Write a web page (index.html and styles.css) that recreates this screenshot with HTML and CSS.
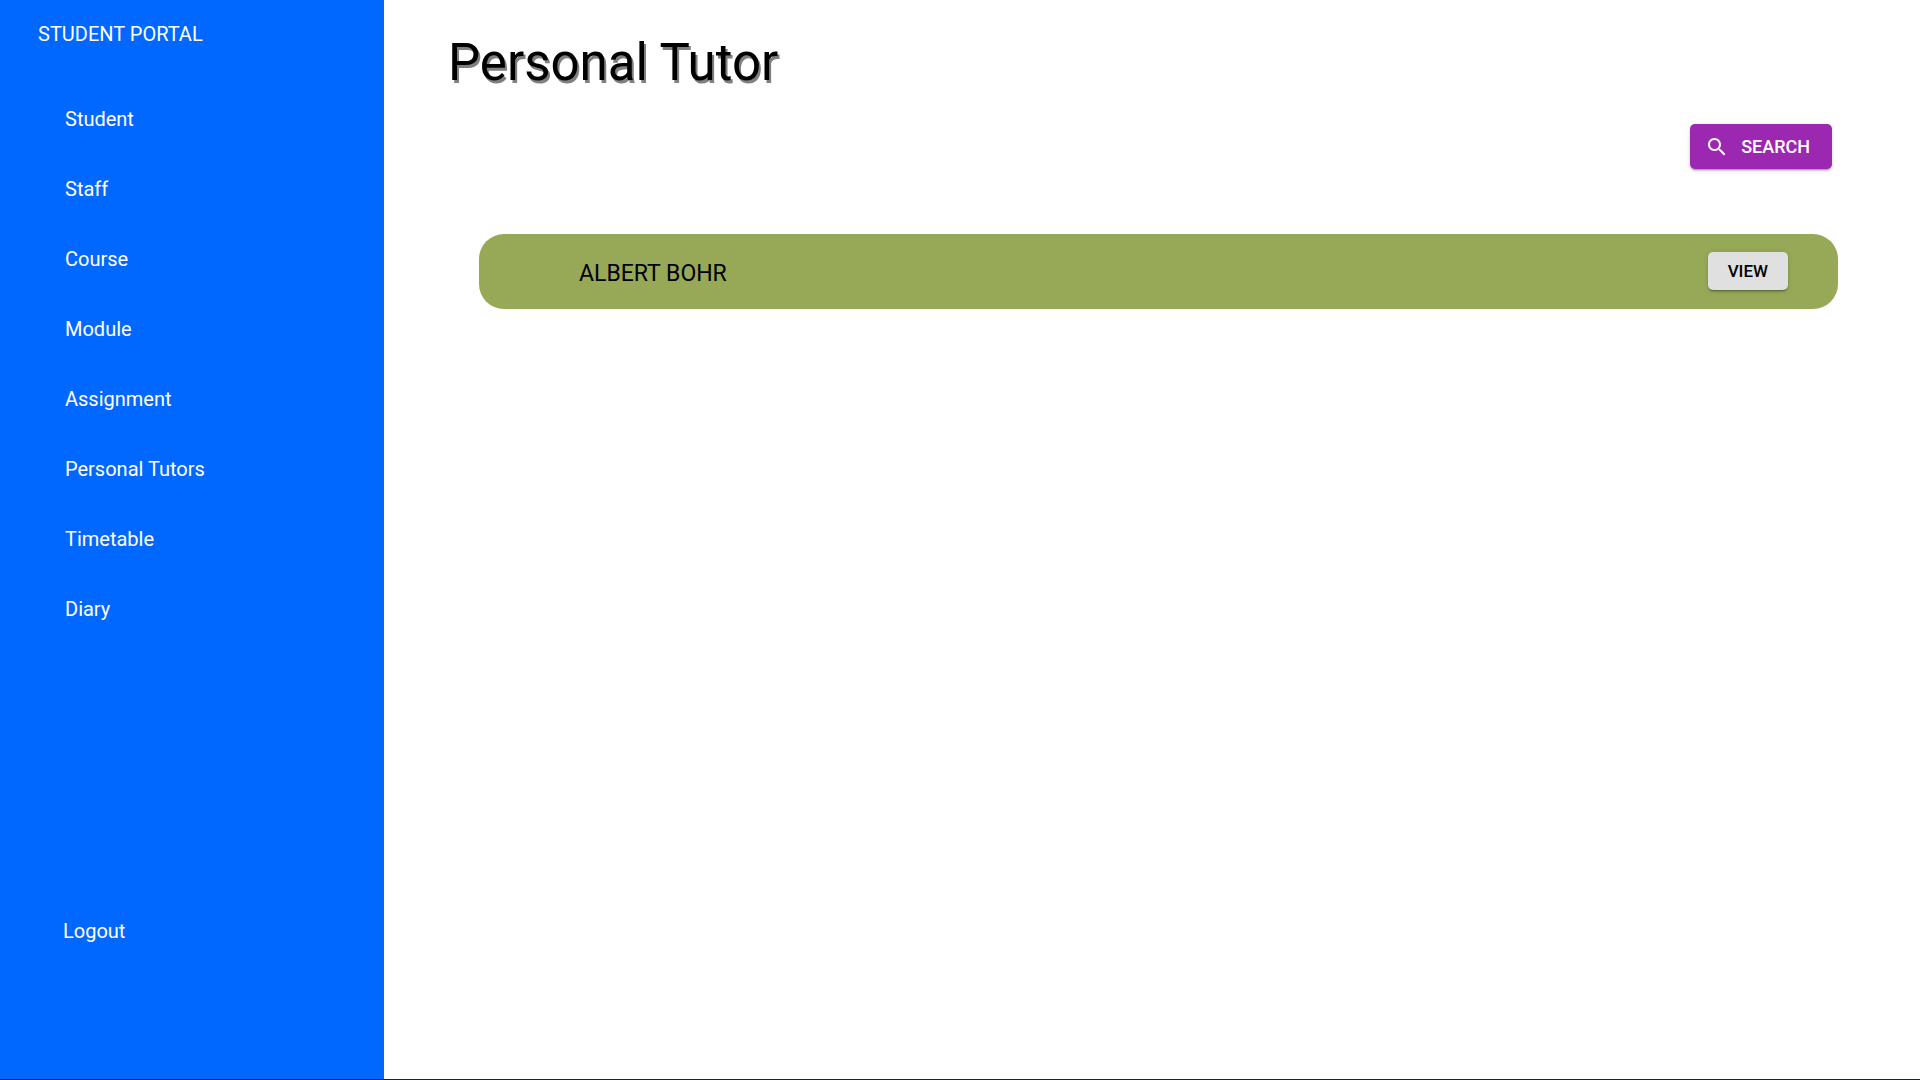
FILE: index.html
```html
<!DOCTYPE html>
<html lang="en">
<head>
<meta charset="utf-8">
<meta name="viewport" content="width=device-width, initial-scale=1">
<title>Student Portal</title>
<link rel="stylesheet" href="styles.css">
</head>
<body>
<div class="layout">
  <aside class="sidebar">
    <div class="brand">STUDENT PORTAL</div>
    <nav class="nav">
      <a class="nav-link" href="#student">Student</a>
      <a class="nav-link" href="#staff">Staff</a>
      <a class="nav-link" href="#course">Course</a>
      <a class="nav-link" href="#module">Module</a>
      <a class="nav-link" href="#assignment">Assignment</a>
      <a class="nav-link" href="#tutors">Personal Tutors</a>
      <a class="nav-link" href="#timetable">Timetable</a>
      <a class="nav-link" href="#diary">Diary</a>
    </nav>
    <button class="logout" type="button">Logout</button>
  </aside>
  <main class="main">
    <h1 class="title">Personal Tutor</h1>
    <div class="toolbar">
      <button class="button search" type="button">
        <svg class="icon" viewBox="0 0 24 24" aria-hidden="true"><path d="M15.5 14h-.79l-.28-.27C15.41 12.59 16 11.11 16 9.5 16 5.91 13.09 3 9.5 3S3 5.91 3 9.5 5.91 16 9.5 16c1.61 0 3.09-.59 4.23-1.57l.27.28v.79l5 4.99L20.49 19l-4.99-5zm-6 0C7.01 14 5 11.99 5 9.5S7.01 5 9.5 5 14 7.01 14 9.5 11.99 14 9.5 14z"/></svg>
        SEARCH
      </button>
    </div>
    <ul class="tutors">
      <li class="tutor">
        <span class="name">ALBERT BOHR</span>
        <button class="button view" type="button">VIEW</button>
      </li>
    </ul>
  </main>
</div>
</body>
</html>
```
FILE: styles.css
```css
* {
  box-sizing: border-box;
}

body {
  margin: 0;
  font-family: Roboto, "Liberation Sans", sans-serif;
  color: #000;
  background: #fff;
}

.layout {
  display: grid;
  grid-template-columns: 20% 1fr;
  min-height: 100vh;
  border-bottom: 1px solid #202124;
}

.sidebar {
  display: flex;
  flex-direction: column;
  align-items: flex-start;
  padding: 22px 38px 136px;
  background: #0068ff;
  color: #fff;
  font-size: 20px;
  line-height: 24px;
}

.nav {
  display: flex;
  flex-direction: column;
  gap: 46px;
  padding: 61px 27px 0;
}

.nav-link {
  color: inherit;
  text-decoration: none;
}

.logout {
  margin-top: auto;
  padding: 0 25px;
  border: 0;
  background: none;
  color: inherit;
  font: inherit;
}

.main {
  padding: 33px 82px 32px 64px;
}

.title {
  margin: 0;
  font-size: 51px;
  font-weight: 400;
  line-height: 60px;
  text-shadow: 2px 3px #808080;
}

.toolbar {
  display: flex;
  justify-content: flex-end;
  padding: 31px 6px 65px 0;
}

.button {
  display: flex;
  align-items: center;
  justify-content: center;
  border: 0;
  border-radius: 5px;
  font-family: inherit;
  font-weight: 500;
  box-shadow: 0 3px 1px -2px rgba(0, 0, 0, 0.2), 0 2px 2px rgba(0, 0, 0, 0.14), 0 1px 5px rgba(0, 0, 0, 0.12);
}

.search {
  gap: 12px;
  padding: 8px 22px 8px 15px;
  background: #9c27b0;
  color: #fff;
  font-size: 18px;
  line-height: 29px;
}

.icon {
  width: 24px;
  height: 24px;
  fill: currentColor;
}

.tutors {
  margin: 0;
  padding: 0 0 0 31px;
  list-style: none;
}

.tutor {
  display: flex;
  align-items: center;
  justify-content: space-between;
  padding: 18px 50px 19px 100px;
  border-radius: 25px;
  background: #97a857;
}

.name {
  padding-top: 5px;
  font-size: 23px;
  line-height: 32px;
}

.view {
  padding: 7px 20px;
  background: #e0e0e0;
  color: #000;
  font-size: 17px;
  line-height: 24px;
}
```
